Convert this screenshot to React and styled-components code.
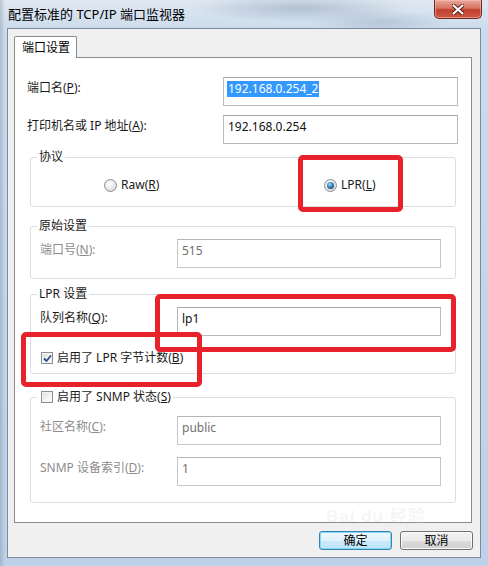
import React from 'react';
import styled, { createGlobalStyle } from 'styled-components';

const Global = createGlobalStyle`
  html, body { margin: 0; padding: 0; background: #ffffff; }
  body {
    font-family: "Noto Sans", "Noto Sans CJK SC", sans-serif;
    font-size: 12px;
    color: #1b1b1b;
  }
  * { box-sizing: border-box; }
`;

const Window = styled.div`
  position: relative;
  width: 488px;
  height: 566px;
  display: flex;
  flex-direction: column;
  padding: 0 7px 8px 7px;
  overflow: hidden;
  background:
    radial-gradient(ellipse 110px 14px at 300px 8px, rgba(80, 100, 130, 0.28), transparent),
    radial-gradient(ellipse 70px 12px at 380px 22px, rgba(80, 100, 130, 0.2), transparent),
    linear-gradient(90deg, rgba(110, 130, 155, 0.35) 0, transparent 5px),
    linear-gradient(180deg, #dfe8f2 0%, #cddcec 5%, #c2d5e9 60%, #bdd2e8 100%);
`;

const TitleBar = styled.div`
  height: 28px;
  display: flex;
  align-items: flex-start;
  justify-content: space-between;
`;

const Title = styled.div`
  padding: 6px 0 0 1px;
  font-size: 13px;
  line-height: 16px;
  color: #000;
`;

const CloseButton = styled.div`
  width: 48px;
  height: 19px;
  margin-right: -1px;
  display: flex;
  align-items: center;
  justify-content: center;
  border: 1px solid #6e2a22;
  border-top: none;
  border-radius: 0 0 5px 5px;
  background: linear-gradient(180deg, #e9a99b 0%, #d6725f 45%, #c0402f 55%, #cf5a44 100%);
  box-shadow: inset 0 0 0 1px rgba(255, 200, 190, 0.5);
`;

const Client = styled.div`
  flex: 1;
  display: flex;
  flex-direction: column;
  padding: 7px 8px 7px 6px;
  background: #f0f0f0;
  border: 1px solid #7d8a98;
`;

const TabStrip = styled.div`
  display: flex;
  height: 22px;
  position: relative;
  z-index: 1;
`;

const Tab = styled.div`
  width: 63px;
  height: 22px;
  padding: 3px 0 0 7px;
  font-size: 12px;
  line-height: 16px;
  color: #000;
  background: #ffffff;
  border: 1px solid #898c95;
  border-bottom: none;
  border-radius: 2px 2px 0 0;
`;

const Panel = styled.div`
  flex: 1;
  margin-top: -1px;
  display: flex;
  flex-direction: column;
  padding: 19px 13px 0 12px;
  background: #ffffff;
  border: 1px solid #898c95;
`;

const FormRow = styled.div`
  display: grid;
  grid-template-columns: ${(p) => p.$label}px 1fr;
  align-items: start;
  height: 29px;
  margin-top: ${(p) => p.$mt || 0}px;
`;

const Label = styled.div`
  padding-top: 3px;
  line-height: 16px;
  font-size: 12px;
  white-space: nowrap;
  color: ${(p) => (p.$disabled ? '#8c8c8c' : '#1b1b1b')};
`;

const Field = styled.div`
  height: 29px;
  padding: 3px 0 0 4px;
  line-height: 16px;
  font-size: 12px;
  white-space: nowrap;
  background: #ffffff;
  color: ${(p) => (p.$disabled ? '#6f6f6f' : '#111')};
  border: 1px solid ${(p) => (p.$disabled ? '#c4c8cc' : '#b7bbc1')};
  border-top-color: ${(p) => (p.$disabled ? '#b3b7bb' : '#a3a7ad')};
`;

const Selected = styled.span`
  display: inline-block;
  margin-left: -1px;
  padding: 0 1px;
  background: #3399ff;
  color: #ffffff;
`;

const U = styled.span`
  text-decoration: underline;
  text-underline-offset: 1px;
`;

const Group = styled.fieldset`
  margin: ${(p) => p.$mt}px 2px 0 3px;
  padding: ${(p) => p.$pt}px 14px ${(p) => p.$pb}px 9px;
  min-width: 0;
  border: 1px solid #d5dfe5;
  border-radius: 3px;
`;

const Legend = styled.legend`
  margin-left: -3px;
  padding: 0 2px;
  font-size: 12px;
  line-height: 14px;
  color: #1b1b1b;
  display: flex;
  align-items: center;
  gap: 4px;
  white-space: nowrap;
`;

const RadioRow = styled.div`
  display: grid;
  grid-template-columns: 220px auto;
  padding-left: 64px;
  height: 14px;
  align-items: center;
`;

const Choice = styled.label`
  display: flex;
  align-items: center;
  gap: 4px;
  line-height: 14px;
  white-space: nowrap;
  color: #1b1b1b;
`;

const Radio = styled.span`
  position: relative;
  width: 13px;
  height: 13px;
  border-radius: 50%;
  border: 1px solid #8b9096;
  background: radial-gradient(circle at 40% 35%, #ffffff 0%, #e6e6e6 55%, #c9c9c9 100%);
  flex: none;
  &::after {
    content: '';
    display: ${(p) => (p.$checked ? 'block' : 'none')};
    position: absolute;
    left: 2px;
    top: 2px;
    width: 7px;
    height: 7px;
    border-radius: 50%;
    background: radial-gradient(circle at 40% 35%, #a9def8 0%, #3a8cc6 40%, #12406a 80%, #0b2740 100%);
  }
`;

const Check = styled.span`
  width: 12px;
  height: 12px;
  margin-left: ${(p) => p.$ml || 0}px;
  flex: none;
  display: flex;
  align-items: center;
  justify-content: center;
  border: 1px solid #8c8f94;
  background: linear-gradient(135deg, #dcdcdc 0%, #f4f4f4 60%, #ffffff 100%);
  box-shadow: inset 0 0 0 1px #f4f4f4;
`;

const CheckRow = styled.div`
  display: flex;
  align-items: center;
  gap: 4px;
  height: 14px;
  margin-top: 15px;
  margin-left: 1px;
  line-height: 14px;
  white-space: nowrap;
`;

const ButtonRow = styled.div`
  display: flex;
  justify-content: flex-end;
  gap: 8px;
  margin-top: 8px;
  margin-right: -1px;
  height: 19px;
`;

const Button = styled.div`
  width: 73px;
  height: 19px;
  display: flex;
  align-items: center;
  justify-content: center;
  font-size: 12px;
  line-height: 14px;
  color: #000;
  border-radius: 3px;
  border: 1px solid ${(p) => (p.$default ? '#3c7fb1' : '#707070')};
  background: ${(p) =>
    p.$default
      ? 'linear-gradient(180deg, #eef8fd 0%, #e0f2fc 50%, #cdebfb 50%, #bde3f7 100%)'
      : 'linear-gradient(180deg, #f2f2f2 0%, #ebebeb 50%, #dddddd 50%, #cfcfcf 100%)'};
  box-shadow: inset 0 0 0 1px ${(p) => (p.$default ? '#7fdcf9' : '#fcfcfc')};
`;

const Mark = styled.div`
  position: absolute;
  left: ${(p) => p.$x}px;
  top: ${(p) => p.$y}px;
  width: ${(p) => p.$w}px;
  height: ${(p) => p.$h}px;
  border: 5px solid #e8222a;
  border-radius: 5px;
  pointer-events: none;
`;

const Watermark = styled.div`
  position: absolute;
  left: 326px;
  top: 508px;
  font-family: "Liberation Sans", "Noto Sans CJK SC", sans-serif;
  font-size: 17px;
  line-height: 18px;
  font-weight: bold;
  letter-spacing: 1px;
  color: rgba(200, 205, 215, 0.2);
  pointer-events: none;
  white-space: nowrap;
`;

export default function App() {
  return (
    <>
      <Global />
      <Window>
        <TitleBar>
          <Title>配置标准的 TCP/IP 端口监视器</Title>
          <CloseButton>
            <svg width="12" height="11" viewBox="0 0 12 11">
              <path d="M1.5 1.5 L10.5 9.5 M10.5 1.5 L1.5 9.5" stroke="#5a1c15" strokeWidth="4" strokeLinecap="round" />
              <path d="M1.5 1.5 L10.5 9.5 M10.5 1.5 L1.5 9.5" stroke="#ffffff" strokeWidth="2.2" strokeLinecap="round" />
            </svg>
          </CloseButton>
        </TitleBar>
        <Client>
          <TabStrip>
            <Tab>端口设置</Tab>
          </TabStrip>
          <Panel>
            <FormRow $label={196}>
              <Label>端口名(<U>P</U>):</Label>
              <Field><Selected>192.168.0.254_2</Selected></Field>
            </FormRow>
            <FormRow $label={196} $mt={9}>
              <Label>打印机名或 IP 地址(<U>A</U>):</Label>
              <Field>192.168.0.254</Field>
            </FormRow>

            <Group $mt={6} $pt={14} $pb={14}>
              <Legend>协议</Legend>
              <RadioRow>
                <Choice><Radio /><span>Raw(<U>R</U>)</span></Choice>
                <Choice><Radio $checked /><span>LPR(<U>L</U>)</span></Choice>
              </RadioRow>
            </Group>

            <Group $mt={12} $pt={6} $pb={10}>
              <Legend>原始设置</Legend>
              <FormRow $label={137}>
                <Label $disabled>端口号(<U>N</U>):</Label>
                <Field $disabled>515</Field>
              </FormRow>
            </Group>

            <Group $mt={8} $pt={6} $pb={8}>
              <Legend>LPR 设置</Legend>
              <FormRow $label={137}>
                <Label>队列名称(<U>Q</U>):</Label>
                <Field>lp1</Field>
              </FormRow>
              <CheckRow>
                <Check>
                  <svg width="9" height="9" viewBox="0 0 9 9">
                    <path d="M1 4.5 L3.5 7 L8 1.5" fill="none" stroke="#2b4a86" strokeWidth="1.8" />
                  </svg>
                </Check>
                <span>启用了 LPR 字节计数(<U>B</U>)</span>
              </CheckRow>
            </Group>

            <Group $mt={16} $pt={12} $pb={16}>
              <Legend>
                <Check $ml={2} />
                <span>启用了 SNMP 状态(<U>S</U>)</span>
              </Legend>
              <FormRow $label={137}>
                <Label $disabled>社区名称(<U>C</U>):</Label>
                <Field $disabled>public</Field>
              </FormRow>
              <FormRow $label={137} $mt={12}>
                <Label $disabled>SNMP 设备索引(<U>D</U>):</Label>
                <Field $disabled>1</Field>
              </FormRow>
            </Group>
          </Panel>
          <ButtonRow>
            <Button $default>确定</Button>
            <Button>取消</Button>
          </ButtonRow>
        </Client>
        <Mark $x={298} $y={155} $w={105} $h={57} />
        <Mark $x={155} $y={294} $w={301} $h={58} />
        <Mark $x={21} $y={332} $w={181} $h={55} />
        <Watermark>Bai du 经验</Watermark>
      </Window>
    </>
  );
}
